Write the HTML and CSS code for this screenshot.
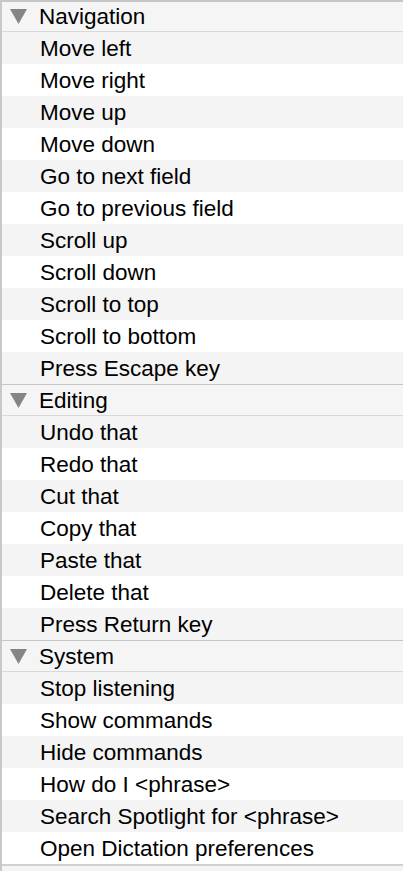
FILE: index.html
```html
<!DOCTYPE html>
<html>
<head>
<meta charset="utf-8">
<link rel="stylesheet" href="styles.css">
</head>
<body>
<div class="list">
  <div class="header"><svg class="tri" width="17" height="15" viewBox="0 0 17 15"><polygon points="0,0 17,0 8.5,15" fill="#858585"/></svg><span>Navigation</span></div>
  <div class="row odd">Move left</div>
  <div class="row">Move right</div>
  <div class="row odd">Move up</div>
  <div class="row">Move down</div>
  <div class="row odd">Go to next field</div>
  <div class="row">Go to previous field</div>
  <div class="row odd">Scroll up</div>
  <div class="row">Scroll down</div>
  <div class="row odd">Scroll to top</div>
  <div class="row">Scroll to bottom</div>
  <div class="row odd">Press Escape key</div>
  <div class="header"><svg class="tri" width="17" height="15" viewBox="0 0 17 15"><polygon points="0,0 17,0 8.5,15" fill="#858585"/></svg><span>Editing</span></div>
  <div class="row odd">Undo that</div>
  <div class="row">Redo that</div>
  <div class="row odd">Cut that</div>
  <div class="row">Copy that</div>
  <div class="row odd">Paste that</div>
  <div class="row">Delete that</div>
  <div class="row odd">Press Return key</div>
  <div class="header"><svg class="tri" width="17" height="15" viewBox="0 0 17 15"><polygon points="0,0 17,0 8.5,15" fill="#858585"/></svg><span>System</span></div>
  <div class="row odd">Stop listening</div>
  <div class="row">Show commands</div>
  <div class="row odd">Hide commands</div>
  <div class="row">How do I &lt;phrase&gt;</div>
  <div class="row odd">Search Spotlight for &lt;phrase&gt;</div>
  <div class="row">Open Dictation preferences</div>
  <div class="footer"></div>
</div>
</body>
</html>
```
FILE: styles.css
```css
html, body {
  margin: 0;
  padding: 0;
  background: #ffffff;
  overflow: hidden;
}
.list {
  width: 403px;
  height: 871px;
  box-sizing: border-box;
  border-left: 2px solid #c8c8c8;
  font-family: "Liberation Sans", Arial, sans-serif;
  font-size: 22.5px;
  color: #000;
  overflow: hidden;
}
.header {
  height: 32px;
  box-sizing: border-box;
  border-top: 1px solid #c6c6c6;
  border-bottom: 1px solid #d9d9d9;
  background: #f5f5f5;
  display: flex;
  align-items: center;
  padding-left: 8px;
  padding-top: 1px;
  gap: 12px;
}
.header:first-child {
  border-top: 2px solid #c6c6c6;
}
.tri {
  flex: none;
  margin-top: -1px;
}
.row {
  height: 32px;
  box-sizing: border-box;
  line-height: 31px;
  padding-top: 1px;
  padding-left: 38px;
  white-space: nowrap;
  background: #ffffff;
}
.row.odd {
  background: #f4f4f4;
}
.footer {
  height: 10px;
  border-top: 2px solid #d0d0d0;
  background: #f4f4f4;
}
```
